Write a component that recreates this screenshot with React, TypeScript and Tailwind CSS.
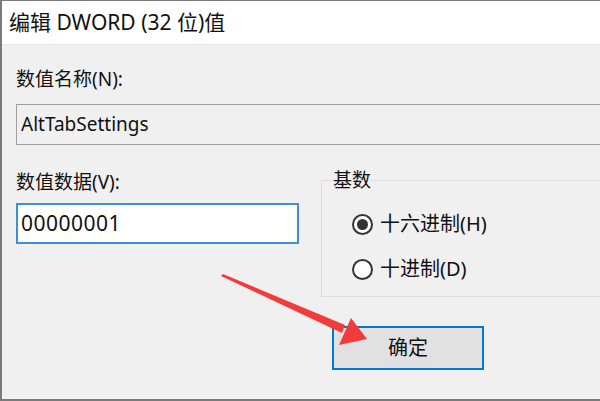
import React from 'react';

const font = { fontFamily: '"Noto Sans", "Noto Sans CJK SC", sans-serif' };

const Radio: React.FC<{ checked?: boolean; label: string }> = ({ checked, label }) => (
  <div className="flex items-center h-[24px]">
    <span className="w-[21px] h-[21px] rounded-full border-2 border-[#333333] bg-white flex items-center justify-center">
      {checked && <span className="w-[11px] h-[11px] rounded-full bg-[#333333]" />}
    </span>
    <span className="ml-[7px] text-[20px] leading-[24px] text-[#111111]">{label}</span>
  </div>
);

export default function App() {
  return (
    <div
      className="relative w-[600px] h-[401px] overflow-hidden bg-[#f0f0f0] border-l-2 border-t border-b-2 border-[#7a7a7a]"
      style={font}
    >
      {/* title bar */}
      <div className="h-[44px] bg-white flex items-center pl-[7px] border-b border-[#e6e6e6]">
        <span className="text-[21px] text-[#111111]">编辑 DWORD (32 位)值</span>
      </div>

      <div className="pl-[14px] pt-[22px]">
        <div className="text-[19px] leading-[24px] text-[#111111]">数值名称(N):</div>
        <div className="mt-[13px] w-[600px] h-[41px] border border-[#a0a0a0] bg-[#f0f0f0] flex items-center pl-[4px]">
          <span className="text-[19px] text-[#111111]">AltTabSettings</span>
        </div>

        <div className="mt-[23px] flex items-start">
          <div className="w-[283px] shrink-0 pt-[2px]">
            <div className="text-[19px] leading-[24px] text-[#111111]">数值数据(V):</div>
            <div className="mt-[9px] h-[41px] border-2 border-[#3c8fdc] bg-white flex items-center pl-[3px]">
              <span className="text-[21px] tracking-[0.5px] text-[#111111]">00000001</span>
            </div>
          </div>

          <fieldset className="ml-[22px] w-[300px] shrink-0 h-[129px] border border-[#dcdcdc] pl-[10px] pt-[20px]">
            <legend className="px-[1px] text-[19px] leading-[24px] text-[#111111]">基数</legend>
            <div className="pl-[20px]">
              <Radio checked label="十六进制(H)" />
              <div className="mt-[21px]">
                <Radio label="十进制(D)" />
              </div>
            </div>
          </fieldset>
        </div>

        <div className="mt-[29px] ml-[316px] w-[152px] h-[44px] border-2 border-[#0078d7] bg-[#e1e1e1] flex items-center justify-center">
          <span className="text-[20px] text-[#111111]">确定</span>
        </div>
      </div>

      {/* red annotation arrow */}
      <svg className="absolute left-0 top-0 pointer-events-none" width="600" height="401">
        <polygon points="219,275 221,273 343,324 340,332" fill="#f23b3b" />
        <polygon points="365,338 349,317 337,344" fill="#f23b3b" />
      </svg>
    </div>
  );
}
